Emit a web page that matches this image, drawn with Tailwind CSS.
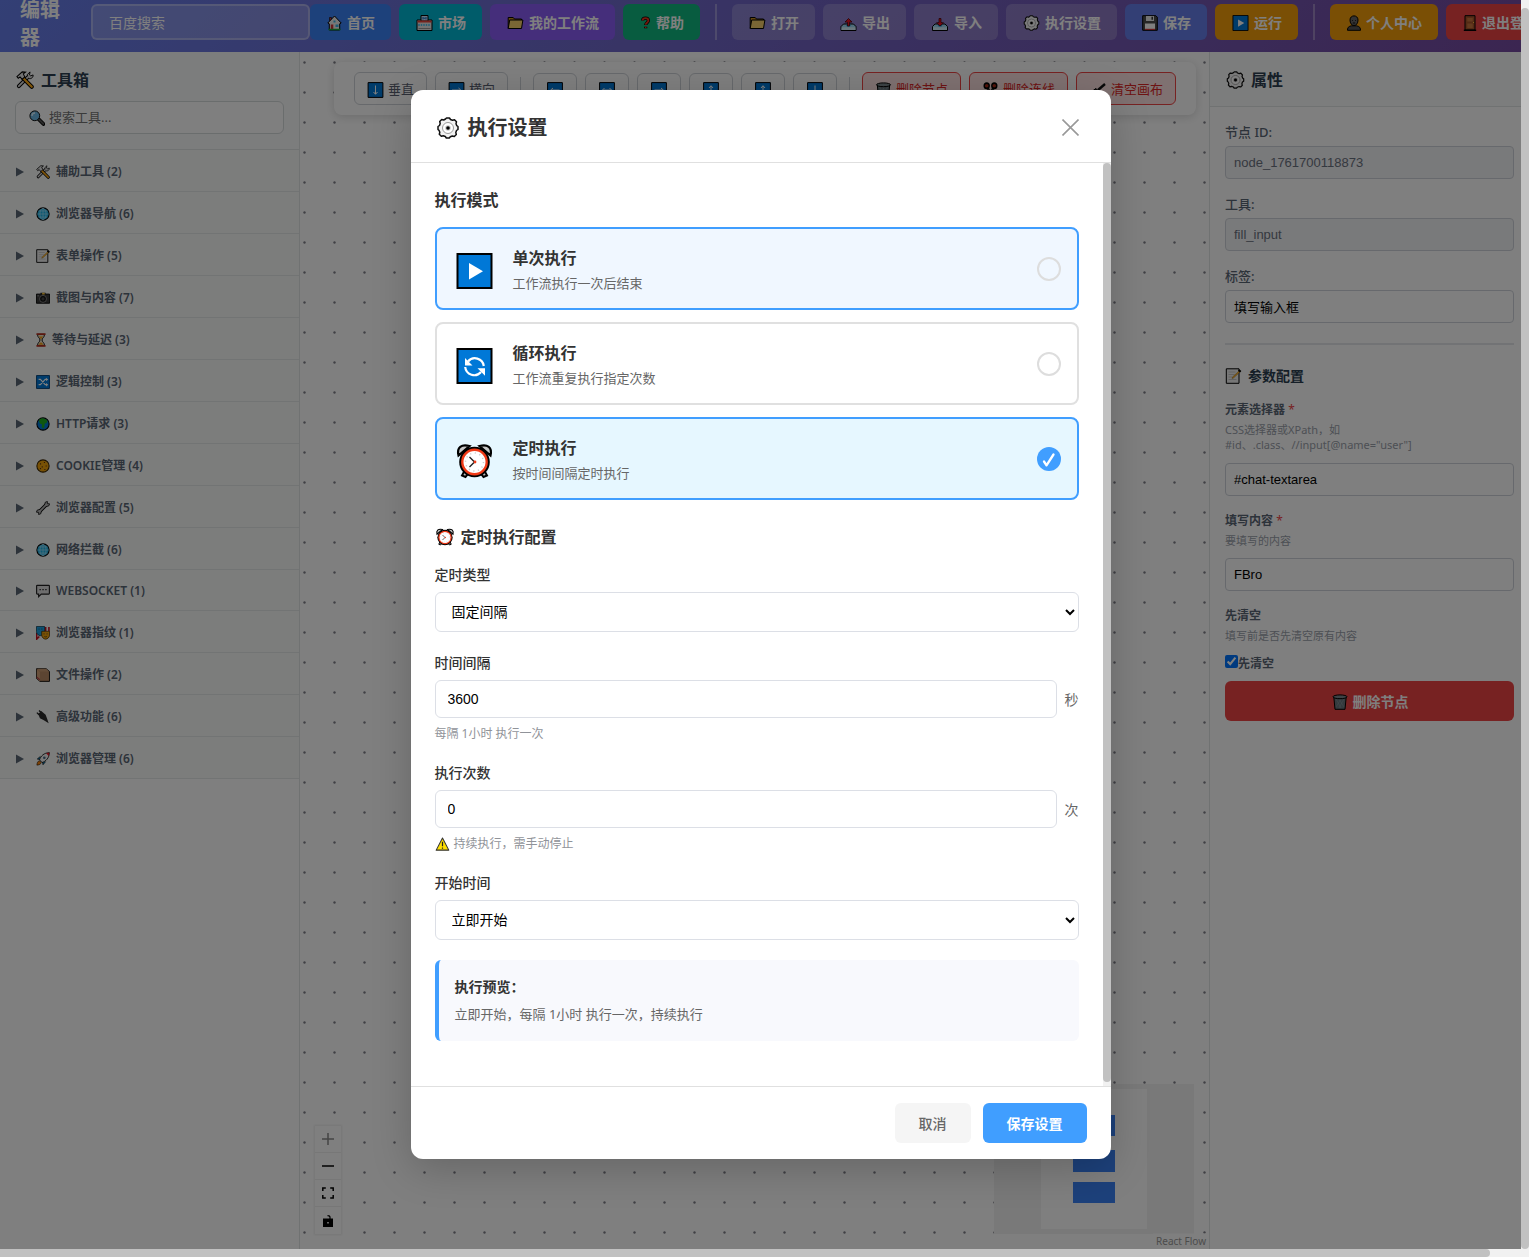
<!DOCTYPE html>
<html lang="zh-CN">
<head>
<meta charset="utf-8">
<meta name="viewport" content="width=device-width, initial-scale=1">
<title>工作流编辑器</title>
<script src="https://cdn.jsdelivr.net/npm/@tailwindcss/browser@4"></script>
</head>
<body class="font-['Noto_Sans','Noto_Sans_CJK_SC',sans-serif]">

<!-- icon sprite -->
<svg class="hidden" aria-hidden="true">
  <symbol id="house" viewBox="0 0 16 16"><path d="M3 7h10v7.5H3z" fill="#f3ece6"/><path d="M3 2.500h2v3H3z" fill="#d13438" stroke="#000" stroke-width=".6"/><path d="M8 1 1.300 8l1.500.8V15h10.400V8.800l1.500-.8z" fill="#f1eeec" stroke="#000"/><path d="M4.300 9.500h2.500V15H4.300z" fill="#d13438"/><path d="M9 9.500h3V12H9zM7 5.500h2v2H7z" fill="#38b8e8"/><path d="M2 14.500h12" stroke="#16a63a" stroke-width="1.500"/></symbol>
  <symbol id="store" viewBox="0 0 16 16"><path d="M.5 5h15v10.500H.5z" fill="#e6e6e6" stroke="#000"/><path d="M4.500.5h7V6h-7z" fill="#cfe4ff" stroke="#000"/><path d="M6.500 2v2.500M9.500 2v2.500M7 3.200h2" stroke="#0067c0"/><path d="M1 5.500h14V7.500H1z" fill="#e8443a"/><path d="M2.500 9v2M5 9v2M7.500 9v2M10 9v2M12.500 9v2" stroke="#4cc2ee" stroke-width="1.400"/><path d="M2 13.500h12" stroke="#999"/></symbol>
  <symbol id="folder" viewBox="0 0 16 16"><path d="M.7 13.500v-11h5L7 4h7v2" fill="#c98d1c" stroke="#000" stroke-linejoin="round"/><path d="M.7 13.500 2.200 5H15.400L14 13.500z" fill="#f5cd6b" stroke="#000" stroke-linejoin="round"/></symbol>
  <symbol id="question" viewBox="0 0 16 16"><path d="M4.500 5C4.500 1 11.500 1 11.500 5c0 2.700-3.200 2.700-3.200 5.500M8.200 12.500v2" fill="none" stroke="#000" stroke-width="4"/><path d="M4.500 5C4.500 1 11.500 1 11.500 5c0 2.700-3.200 2.700-3.200 5M8.200 12.700v1.500" fill="none" stroke="#e8321a" stroke-width="2.200"/></symbol>
  <symbol id="outbox" viewBox="0 0 16 16"><path d="M3 9h10l2.500 2.500v4H.5v-4z" fill="#9fd9f2" stroke="#000" stroke-linejoin="round"/><path d="M1 12.300h14V15H1z" fill="#d5effa"/><path d="M5.500 9.500h5l-1 2h-3z" fill="#1b8fd0"/><path d="M8 3.500 4.500 7l2.500.2V11h2V7.200l2.500-.2z" fill="#e81224" stroke="#3a0000" stroke-width=".7"/></symbol>
  <symbol id="inbox" viewBox="0 0 16 16"><path d="M3 9h10l2.500 2.500v4H.5v-4z" fill="#9fd9f2" stroke="#000" stroke-linejoin="round"/><path d="M1 12.300h14V15H1z" fill="#d5effa"/><path d="M5.500 9.500h5l-1 2h-3z" fill="#1b8fd0"/><path d="M8 11 4.500 7.800 7 7.500V3.500h2v4l2.500.3z" fill="#e81224" stroke="#3a0000" stroke-width=".7"/></symbol>
  <symbol id="gear" viewBox="0 0 22 22"><path d="m8.500 2 1-1h3l1 1.500 2 .7 2-.5 2 2-.5 2 .8 2L21 9.500v3l-1.500 1-.7 2 .5 2-2 2-2-.5-2 .8-1 1.200h-3l-1-1.500-2-.7-2 .5-2-2 .5-2-.8-2L1 12.500v-3L2.500 8.500l.7-2-.5-2 2-2 2 .5z" fill="#f2f2f2" stroke="#111" stroke-width="1.500" stroke-linejoin="round"/><circle cx="11" cy="11" r="5.500" fill="#fff" stroke="#999"/><circle cx="11" cy="11" r="2.800" fill="#c9c9c9"/><circle cx="11" cy="11" r="1.800" fill="#000"/></symbol>
  <symbol id="floppy" viewBox="0 0 16 16"><path d="M.7.700h13.100l1.500 1.500v13.100H.7z" fill="#4d4d4d" stroke="#000"/><path d="M4 1h8v5H4z" fill="#e9e9e9"/><path d="M9.500 1.800h1.400v3H9.500z" fill="#222"/><path d="M3 8.500h10V15H3z" fill="#fff"/><path d="M3 13.800h10V15H3z" fill="#d13438"/></symbol>
  <symbol id="play" viewBox="0 0 36 36"><path d="M1 1h34v34H1z" fill="#0078d7" stroke="#000" stroke-width="2"/><path d="M12.500 10v16.500L26.500 18.200z" fill="#fff"/></symbol>
  <symbol id="repeat" viewBox="0 0 36 36"><path d="M1 1h34v34H1z" fill="#0078d7" stroke="#000" stroke-width="2"/><path d="M11.500 13.500A9 9 0 0 1 27.300 18M8.700 19A9 9 0 0 0 24.500 24" fill="none" stroke="#fff" stroke-width="2.200"/><path d="M8.500 10v7.500H16zM28.500 27.800v-7.500H21z" fill="#fff"/></symbol>
  <symbol id="person" viewBox="0 0 16 16"><path d="M1.500 15.300c0-4 2.500-4 4-4.500h5c1.500.5 4 .5 4 4.500z" fill="#555" stroke="#000"/><path d="M4 5c0-5.500 8-5.500 8 0 0 3-1.500 5.500-4 5.500S4 8 4 5z" fill="#666" stroke="#000"/><path d="M6 5.500h.8M9.200 5.500h.8M6.800 8h2.400" stroke="#111"/></symbol>
  <symbol id="door" viewBox="0 0 16 16"><path d="M3 .7h10V15H3z" fill="#a8542a" stroke="#000"/><path d="M5.300 3h5.400v3.500H5.300zM5.300 8.500h5.400V13H5.300z" fill="#c8773f"/><path d="M11 7.500h1" stroke="#ffc83d"/><path d="M1.800 15.300h12.400" stroke="#000" stroke-width="1.400"/></symbol>
  <symbol id="tools" viewBox="0 0 16 16"><path d="m2.500 13.500 8-8" stroke="#000" stroke-width="3.400" stroke-linecap="round"/><path d="M10 3.200 12.500.8 12 3.500l1 .8 2.200-.8C15.600 6 12.500 8 10.500 6z" fill="#ddd" stroke="#000" stroke-width=".8"/><path d="m2.500 13.500 8-8" stroke="#ddd" stroke-width="1.600" stroke-linecap="round"/><path d="m6.500 6.500 7.500 7.500" stroke="#000" stroke-width="3.600" stroke-linecap="round"/><path d="m6.500 6.500 7.500 7.500" stroke="#ffaa12" stroke-width="2" stroke-linecap="round"/><path d="M.8 5 5.500.8l3 .3-2 1.500 1.300 2.600L5.500 7.500 3.600 5.200 2 6.500z" fill="#e5e5e5" stroke="#000" stroke-width=".9"/></symbol>
  <symbol id="search" viewBox="0 0 16 16"><path d="m9.500 9 5 5" stroke="#000" stroke-width="3.800" stroke-linecap="round"/><path d="m10 9.500 4.300 4.300" stroke="#555" stroke-width="2" stroke-linecap="round"/><circle cx="5.800" cy="5.800" r="4.900" fill="#6cb8e6" stroke="#111"/><path d="M3 6a3 3 0 0 1 3-3" stroke="#d8f1ff" stroke-width="1.400" fill="none"/></symbol>
  <symbol id="globe" viewBox="0 0 16 16"><circle cx="8" cy="8" r="7" fill="#1fb4e6" stroke="#000" stroke-width="1.200"/><path d="M8 1.500v13M1.500 8h13M3 4.500h10M3 11.500h10" stroke="#a5e3fa" stroke-width=".8"/><ellipse cx="8" cy="8" rx="3.500" ry="6.500" fill="none" stroke="#a5e3fa" stroke-width=".8"/></symbol>
  <symbol id="memo" viewBox="0 0 16 16"><path d="M.8.800h12.700v14.500H.8z" fill="#efefef" stroke="#000"/><path d="M3 4h7M3 6.500h6M3 9h4M3 11.500h8" stroke="#c5c5c5"/><path d="m6.500 10.500.5-1.500 7-6.500 1 1-7 6.500z" fill="#ffb32c" stroke="#805a10" stroke-width=".4"/><path d="m13.200 2 2 1.800" stroke="#000" stroke-width="2"/></symbol>
  <symbol id="camera" viewBox="0 0 16 16"><path d="M.5 3.500h15V14H.5z" fill="#3a3a3a" stroke="#000"/><path d="M5 2h6v3H5z" fill="#222"/><path d="M7 2h3v2H7z" fill="#ffc83d"/><circle cx="8" cy="9" r="4" fill="#111" stroke="#8a8a8a"/><circle cx="8" cy="9" r="1.800" fill="#444"/><path d="M1.500 5.500h2" stroke="#999"/></symbol>
  <symbol id="hourglass" viewBox="0 0 11 16"><path d="M1.500 1.500c0 4 2.800 4 2.800 6.500s-2.800 2.500-2.800 6.500h8c0-4-2.800-4-2.800-6.500s2.800-2.500 2.800-6.500z" fill="#efe3c8" stroke="#000"/><path d="M3 4h5L5.500 7.500zM3 13.500c.3-2 2.500-3 2.500-3S7.700 11.500 8 13.500z" fill="#f2a018"/><path d="M.3 1.300h10.400M.3 14.700h10.400" stroke="#b5301f" stroke-width="1.900"/></symbol>
  <symbol id="shuffle" viewBox="0 0 16 16"><path d="M.6.600h14.800v14.800H.6z" fill="#0078d7" stroke="#003a70"/><path d="M3 5h2l5.500 6H12M3 11h2l5.500-6H12" fill="none" stroke="#fff" stroke-width="1.200"/><path d="M11.500 3v4L14 5zM11.500 9v4l2.500-2z" fill="#fff"/></symbol>
  <symbol id="earth" viewBox="0 0 16 16"><circle cx="8" cy="8" r="7" fill="#0078d7" stroke="#000" stroke-width="1.200"/><path d="M4 2.500c3-2 7-1 9 2L12 7l-2 .5-.5 4L8 13.500 6.500 11 7 8.500 4.500 7.500l-1-2.500z" fill="#1eaf1e"/></symbol>
  <symbol id="cookie" viewBox="0 0 16 16"><circle cx="8" cy="8" r="7" fill="#f0a30a" stroke="#3a2400" stroke-width="1.200"/><path d="M4.500 5.500h1.300M9 4h1.300M11 8h1.300M6.500 9h1.300M4.500 11h1.300M9.500 12h1.300" stroke="#5b3413" stroke-width="1.400"/></symbol>
  <symbol id="wrench" viewBox="0 0 16 16"><path d="m4 12 8-8" stroke="#000" stroke-width="4"/><path d="M10 4.500 10.500 1.500 13 .5V3l2.500.2-.8 2.300-3 .8zM6 11.500l-.5 3-2.500 1V13L.5 12.800l.8-2.300 3-.8z" fill="#bbb" stroke="#000" stroke-width=".9"/><path d="m4.200 11.800 7.600-7.600" stroke="#bbb" stroke-width="2"/></symbol>
  <symbol id="speech" viewBox="0 0 16 16"><path d="M1.500 1.500h13q.8 0 .8.800v8.400q0 .8-.8.800H6L3 14.500v-3H1.500q-.8 0-.8-.8V2.300q0-.8.800-.8z" fill="#ddd" stroke="#222" stroke-width="1.300"/><path d="M4 6.500h1.500M7.300 6.500h1.500M10.600 6.500h1.500" stroke="#222" stroke-width="1.500"/></symbol>
  <symbol id="masks" viewBox="0 0 16 16"><path d="M.8 8v7l3-3M11 1v5M14.800 1v5" stroke="#c50f1f" stroke-width="1.800" fill="none"/><path d="M.5.500h9.300v6C9.800 9 7 11 5 11S.5 9 .5 6.500z" fill="#1ba1e2" stroke="#002a3c" stroke-width=".8"/><path d="M6.500 6h9v4.500c0 2.500-2.500 4.500-4.500 4.500s-4.500-2-4.500-4.500z" fill="#f0a30a" stroke="#3a2400" stroke-width=".8"/><path d="M8.500 9h1.300M12 9h1.300M9.500 12q1.500 1 3 0M2.800 3.500h1.300M6 3.500h1.300" stroke="#333" stroke-width=".8" fill="none"/></symbol>
  <symbol id="box" viewBox="0 0 16 16"><path d="M.6.800h11L15.400 4v11.300H4.500L.6 12z" fill="#b88a64" stroke="#000"/><path d="M.9 1 4.500 4.500V15L.9 12z" fill="#d3a178"/><path d="M1.500.9h10L15 4H4.500z" fill="#c99b73"/><path d="M1 10.500 4.300 13.500" stroke="#b5454a" stroke-width="1.500"/></symbol>
  <symbol id="plug" viewBox="0 0 16 16"><path d="M2.500 4.500 6 1l5 4.500 1.500 4L14.500 15l-6-3.500-4-2z" fill="#2b2b2b"/><path d="m1 3 2.500 2.500M3.500 .7l2 2" stroke="#222" stroke-width="1.600"/></symbol>
  <symbol id="rocket" viewBox="0 0 16 16"><path d="M5 5 1.500 8l3 .5M11 11l-3 3.500L7.500 11" fill="#1ba1e2" stroke="#000" stroke-width=".8"/><path d="M4 9c1.500-4.500 5-8 11.300-8.300C15 7 11.500 10.500 7 12z" fill="#f2f2f2" stroke="#000" stroke-width=".9"/><path d="M11.500 1.300 15.300.7 14.700 4.500z" fill="#e81224"/><circle cx="9.500" cy="6.500" r="1.500" fill="#4a6a88"/><path d="M1 15c.2-3 1-4.500 3-5l2 2c-.5 2-2 2.800-5 3z" fill="#f7830c" stroke="#000" stroke-width=".6"/></symbol>
  <symbol id="a-down" viewBox="0 0 16 16"><path d="M.6.600h14.800v14.800H.6z" fill="#0078d7" stroke="#000"/><path d="M8 3.500v8.500M6 10l2 2.300 2-2.300" fill="none" stroke="#fff"/></symbol>
  <symbol id="a-up" viewBox="0 0 16 16"><path d="M.6.600h14.800v14.800H.6z" fill="#0078d7" stroke="#000"/><path d="M8 12.500V4M6 6l2-2.300L10 6" fill="none" stroke="#fff"/></symbol>
  <symbol id="a-right" viewBox="0 0 16 16"><path d="M.6.600h14.800v14.800H.6z" fill="#0078d7" stroke="#000"/><path d="M3.500 8H12M10 6l2.300 2L10 10" fill="none" stroke="#fff"/></symbol>
  <symbol id="a-left" viewBox="0 0 16 16"><path d="M.6.600h14.800v14.800H.6z" fill="#0078d7" stroke="#000"/><path d="M12.500 8H4M6 6 3.700 8 6 10" fill="none" stroke="#fff"/></symbol>
  <symbol id="a-both" viewBox="0 0 16 16"><path d="M.6.600h14.800v14.800H.6z" fill="#0078d7" stroke="#000"/><path d="M12.500 8h-9M5.500 6l-2 2 2 2M10.500 6l2 2-2 2" fill="none" stroke="#fff"/></symbol>
  <symbol id="trash" viewBox="0 0 16 16"><path d="M1.800 3h12.400l-1.200 12.300H3z" fill="#68757b" stroke="#000"/><path d="M4 5l5 9M7 5l5 8M12 5l-5 9M9 5l-5 8" stroke="#8d999e" stroke-width=".5"/><ellipse cx="8" cy="2.800" rx="7" ry="1.900" fill="#7b878c" stroke="#000"/></symbol>
  <symbol id="scissors" viewBox="0 0 16 16"><path d="m5 6 6 9M11 6l-6 9" stroke="#333" stroke-width="2.400"/><ellipse cx="4.200" cy="3.800" rx="3.200" ry="3.500" fill="#000"/><ellipse cx="11.800" cy="3.800" rx="3.200" ry="3.500" fill="#000"/><circle cx="4.200" cy="3.700" r="1.800" fill="#a82818"/><circle cx="11.800" cy="3.700" r="1.800" fill="#a82818"/></symbol>
  <symbol id="broom" viewBox="0 0 16 16"><path d="m8 8 7-6" stroke="#111" stroke-width="2.400"/><path d="M6 6.500 9.500 10 6 15 1 10z" fill="#222" stroke="#000"/></symbol>
  <symbol id="clock" viewBox="0 0 36 36"><path d="m9 26-3.500 6.500L9 34l4-5M27 26l3.500 6.500L27 34l-4-5" fill="#bbb" stroke="#000" stroke-width="2"/><path d="M2 12.500C0 4 5 1 13 3zM34 12.500C36 4 31 1 23 3z" fill="#c6c6c6" stroke="#000" stroke-width="2.200"/><circle cx="18" cy="19" r="15.300" fill="#000"/><circle cx="18" cy="19" r="12.200" fill="#fff" stroke="#f03a17" stroke-width="2.400"/><circle cx="18" cy="19" r="9" fill="none" stroke="#ccc" stroke-width="1.500" stroke-dasharray="1.200 3.510"/><path d="m13 14 5 5-5 5" fill="none" stroke="#222" stroke-width="1.400"/><circle cx="18.500" cy="19" r="1.400" fill="#f03a17"/></symbol>
  <symbol id="warning" viewBox="0 0 16 16"><path d="M8 1.200 15.200 15H.8z" fill="#ffe000" stroke="#333" stroke-width="1.200" stroke-linejoin="round"/><path d="M8 5.500v5M8 12v1.500" stroke="#222" stroke-width="1.400"/></symbol>
</svg>

<div class="grid h-screen grid-cols-[1fr_8px] grid-rows-[1fr_8px] overflow-hidden bg-[#f1f1f1]">
  <div class="relative flex min-w-0 flex-col overflow-hidden bg-white">

    <header class="flex h-13 shrink-0 items-center bg-linear-135 from-[#667eea] to-[#764ba2] pb-2 pl-5 text-sm font-semibold whitespace-nowrap text-white">
      <h1 class="w-10 shrink-0 pt-1 text-xl leading-7 font-bold whitespace-normal">编辑器</h1>
      <input type="text" aria-label="工作流名称" value="百度搜索" class="ml-[31px] h-9 w-[219px] shrink-0 rounded-md border-2 border-white/30 bg-white/20 px-4 text-sm font-normal text-white">
      <nav class="flex shrink-0 items-center gap-2">
        <button class="flex h-9 items-center gap-1 rounded-md bg-[#3b82f6] px-4 pt-0.5"><svg class="h-4 w-[17px]"><use href="#house"/></svg>首页</button>
        <button class="flex h-9 items-center gap-1 rounded-md bg-[#00b8d4] px-4 pt-0.5"><svg class="h-4 w-[19px]"><use href="#store"/></svg>市场</button>
        <button class="flex h-9 items-center gap-1 rounded-md bg-[#8b5cf6] px-4 pt-0.5"><svg class="h-4 w-[19px]"><use href="#folder"/></svg>我的工作流</button>
        <button class="flex h-9 items-center gap-1 rounded-md bg-[#10b981] px-4 pt-0.5"><svg class="h-4 w-[13px]"><use href="#question"/></svg>帮助</button>
        <span class="mx-[7px] h-9 w-0.5 bg-white/30"></span>
        <button class="flex h-9 items-center gap-1 rounded-md bg-white/20 px-4 pt-0.5"><svg class="h-4 w-[19px]"><use href="#folder"/></svg>打开</button>
        <button class="flex h-9 items-center gap-1 rounded-md bg-white/20 px-4 pt-0.5"><svg class="h-4 w-[19px]"><use href="#outbox"/></svg>导出</button>
        <button class="flex h-9 items-center gap-1 rounded-md bg-white/20 px-4 pt-0.5"><svg class="h-4 w-5"><use href="#inbox"/></svg>导入</button>
        <button class="flex h-9 items-center gap-1 rounded-md bg-white/20 px-4 pt-0.5"><svg class="h-4 w-[19px]"><use href="#gear"/></svg>执行设置</button>
        <button class="flex h-9 items-center gap-1 rounded-md bg-[#667eea] px-4 pt-0.5"><svg class="h-4 w-[18px]"><use href="#floppy"/></svg>保存</button>
        <button class="flex h-9 items-center gap-1 rounded-md bg-[#f59e0b] px-4 pt-0.5"><svg class="h-4 w-[19px]"><use href="#play"/></svg>运行</button>
        <span class="mx-[7px] h-9 w-0.5 bg-white/30"></span>
        <button class="flex h-9 items-center gap-1 rounded-md bg-[#f59e0b] px-4 pt-0.5"><svg class="h-4 w-4"><use href="#person"/></svg>个人中心</button>
        <button class="flex h-9 items-center gap-1 rounded-md bg-[#ef4444] px-4 pt-0.5"><svg class="h-4 w-4"><use href="#door"/></svg>退出登录</button>
      </nav>
    </header>

    <div class="flex min-h-0 flex-1">
      <!-- toolbox -->
      <aside class="w-[300px] shrink-0 border-r border-[#e0e4e4] bg-white text-[#5a6675]">
        <div class="border-b border-[#e0e4e4] bg-[#f8fafa] px-[15px] pt-4 pb-[15px]">
          <h2 class="flex h-6 items-center gap-1.5 text-base font-bold text-[#2c3e50]"><svg class="h-[18px] w-5"><use href="#tools"/></svg>工具箱</h2>
          <label class="mt-[9px] flex h-[33px] items-center gap-1 rounded-md border border-[#d5dadb] bg-white pl-[13px]">
            <svg class="size-4 shrink-0"><use href="#search"/></svg>
            <input type="search" aria-label="搜索工具" placeholder="搜索工具..." class="w-full text-[13px] placeholder:text-[#757575] focus:outline-none">
          </label>
        </div>
        <ul class="text-xs font-semibold">
          <li class="flex h-[42px] items-center border-b border-[#e4e8e8] bg-[#f8faf9] pt-0.5 pl-4"><svg class="mr-3 h-2.5 w-2" viewBox="0 0 8 10"><path d="M0 .5v9L8 5z" fill="#5a6675"/></svg><svg class="mr-1.5 size-3.5"><use href="#tools"/></svg>辅助工具 (2)</li>
          <li class="flex h-[42px] items-center border-b border-[#e4e8e8] bg-[#f8faf9] pt-0.5 pl-4"><svg class="mr-3 h-2.5 w-2" viewBox="0 0 8 10"><path d="M0 .5v9L8 5z" fill="#5a6675"/></svg><svg class="mr-1.5 size-3.5"><use href="#globe"/></svg>浏览器导航 (6)</li>
          <li class="flex h-[42px] items-center border-b border-[#e4e8e8] bg-[#f8faf9] pt-0.5 pl-4"><svg class="mr-3 h-2.5 w-2" viewBox="0 0 8 10"><path d="M0 .5v9L8 5z" fill="#5a6675"/></svg><svg class="mr-1.5 size-3.5"><use href="#memo"/></svg>表单操作 (5)</li>
          <li class="flex h-[42px] items-center border-b border-[#e4e8e8] bg-[#f8faf9] pt-0.5 pl-4"><svg class="mr-3 h-2.5 w-2" viewBox="0 0 8 10"><path d="M0 .5v9L8 5z" fill="#5a6675"/></svg><svg class="mr-1.5 size-3.5"><use href="#camera"/></svg>截图与内容 (7)</li>
          <li class="flex h-[42px] items-center border-b border-[#e4e8e8] bg-[#f8faf9] pt-0.5 pl-4"><svg class="mr-3 h-2.5 w-2" viewBox="0 0 8 10"><path d="M0 .5v9L8 5z" fill="#5a6675"/></svg><svg class="mr-1.5 h-3.5 w-2.5"><use href="#hourglass"/></svg>等待与延迟 (3)</li>
          <li class="flex h-[42px] items-center border-b border-[#e4e8e8] bg-[#f8faf9] pt-0.5 pl-4"><svg class="mr-3 h-2.5 w-2" viewBox="0 0 8 10"><path d="M0 .5v9L8 5z" fill="#5a6675"/></svg><svg class="mr-1.5 size-3.5"><use href="#shuffle"/></svg>逻辑控制 (3)</li>
          <li class="flex h-[42px] items-center border-b border-[#e4e8e8] bg-[#f8faf9] pt-0.5 pl-4"><svg class="mr-3 h-2.5 w-2" viewBox="0 0 8 10"><path d="M0 .5v9L8 5z" fill="#5a6675"/></svg><svg class="mr-1.5 size-3.5"><use href="#earth"/></svg>HTTP请求 (3)</li>
          <li class="flex h-[42px] items-center border-b border-[#e4e8e8] bg-[#f8faf9] pt-0.5 pl-4"><svg class="mr-3 h-2.5 w-2" viewBox="0 0 8 10"><path d="M0 .5v9L8 5z" fill="#5a6675"/></svg><svg class="mr-1.5 size-3.5"><use href="#cookie"/></svg>COOKIE管理 (4)</li>
          <li class="flex h-[42px] items-center border-b border-[#e4e8e8] bg-[#f8faf9] pt-0.5 pl-4"><svg class="mr-3 h-2.5 w-2" viewBox="0 0 8 10"><path d="M0 .5v9L8 5z" fill="#5a6675"/></svg><svg class="mr-1.5 size-3.5"><use href="#wrench"/></svg>浏览器配置 (5)</li>
          <li class="flex h-[42px] items-center border-b border-[#e4e8e8] bg-[#f8faf9] pt-0.5 pl-4"><svg class="mr-3 h-2.5 w-2" viewBox="0 0 8 10"><path d="M0 .5v9L8 5z" fill="#5a6675"/></svg><svg class="mr-1.5 size-3.5"><use href="#globe"/></svg>网络拦截 (6)</li>
          <li class="flex h-[41px] items-center border-b border-[#e4e8e8] bg-[#f8faf9] pt-0.5 pl-4"><svg class="mr-3 h-2.5 w-2" viewBox="0 0 8 10"><path d="M0 .5v9L8 5z" fill="#5a6675"/></svg><svg class="mr-1.5 size-3.5"><use href="#speech"/></svg>WEBSOCKET (1)</li>
          <li class="flex h-[42px] items-center border-b border-[#e4e8e8] bg-[#f8faf9] pt-0.5 pl-4"><svg class="mr-3 h-2.5 w-2" viewBox="0 0 8 10"><path d="M0 .5v9L8 5z" fill="#5a6675"/></svg><svg class="mr-1.5 size-3.5"><use href="#masks"/></svg>浏览器指纹 (1)</li>
          <li class="flex h-[42px] items-center border-b border-[#e4e8e8] bg-[#f8faf9] pt-0.5 pl-4"><svg class="mr-3 h-2.5 w-2" viewBox="0 0 8 10"><path d="M0 .5v9L8 5z" fill="#5a6675"/></svg><svg class="mr-1.5 size-3.5"><use href="#box"/></svg>文件操作 (2)</li>
          <li class="flex h-[42px] items-center border-b border-[#e4e8e8] bg-[#f8faf9] pt-0.5 pl-4"><svg class="mr-3 h-2.5 w-2" viewBox="0 0 8 10"><path d="M0 .5v9L8 5z" fill="#5a6675"/></svg><svg class="mr-1.5 size-3.5"><use href="#plug"/></svg>高级功能 (6)</li>
          <li class="flex h-[42px] items-center border-b border-[#e4e8e8] bg-[#f8faf9] pt-0.5 pl-4"><svg class="mr-3 h-2.5 w-2" viewBox="0 0 8 10"><path d="M0 .5v9L8 5z" fill="#5a6675"/></svg><svg class="mr-1.5 size-3.5"><use href="#rocket"/></svg>浏览器管理 (6)</li>
        </ul>
      </aside>

      <!-- canvas -->
      <main class="relative min-w-0 flex-1 overflow-hidden bg-white">
        <svg class="absolute inset-0 h-full w-full"><defs><pattern id="dots" width="30" height="30" patternUnits="userSpaceOnUse"><circle cx="4.500" cy="10.500" r="1.200" fill="#81818a"/></pattern></defs><rect width="100%" height="100%" fill="url(#dots)"/></svg>

        <div class="absolute top-[10px] left-[34px] flex h-[53px] items-center gap-2 rounded-lg bg-white px-5 text-[13px] whitespace-nowrap text-[#5a6070] shadow-[0_2px_10px_rgba(0,0,0,0.15)]">
          <button class="flex h-[33px] items-center gap-1 rounded-md border border-[#cfd3d8] px-3 pt-0.5"><svg class="h-4 w-[17px]"><use href="#a-down"/></svg>垂直</button>
          <button class="flex h-[33px] items-center gap-1 rounded-md border border-[#cfd3d8] px-3 pt-0.5"><svg class="h-4 w-[17px]"><use href="#a-right"/></svg>横向</button>
          <span class="mx-1 h-6 w-px bg-[#cfd3d8]"></span>
          <button aria-label="左对齐" class="grid h-[31px] w-11 place-items-center rounded-md border border-[#cfd3d8] pt-0.5"><svg class="size-4"><use href="#a-left"/></svg></button>
          <button aria-label="水平居中" class="grid h-[31px] w-11 place-items-center rounded-md border border-[#cfd3d8] pt-0.5"><svg class="size-4"><use href="#a-both"/></svg></button>
          <button aria-label="右对齐" class="grid h-[31px] w-11 place-items-center rounded-md border border-[#cfd3d8] pt-0.5"><svg class="size-4"><use href="#a-right"/></svg></button>
          <button aria-label="顶部对齐" class="grid h-[31px] w-11 place-items-center rounded-md border border-[#cfd3d8] pt-0.5"><svg class="size-4"><use href="#a-up"/></svg></button>
          <button aria-label="垂直居中" class="grid h-[31px] w-11 place-items-center rounded-md border border-[#cfd3d8] pt-0.5"><svg class="size-4"><use href="#a-up"/></svg></button>
          <button aria-label="底部对齐" class="grid h-[31px] w-11 place-items-center rounded-md border border-[#cfd3d8] pt-0.5"><svg class="size-4"><use href="#a-down"/></svg></button>
          <span class="mx-1 h-6 w-px bg-[#cfd3d8]"></span>
          <button class="flex h-[33px] items-center gap-1 rounded-md border border-[#ef4444] bg-[#fee2e2] px-3 pt-0.5 text-[#dc2626]"><svg class="h-4 w-[17px]"><use href="#trash"/></svg>删除节点</button>
          <button class="flex h-[33px] items-center gap-1 rounded-md border border-[#ef4444] bg-[#fee2e2] px-3 pt-0.5 text-[#dc2626]"><svg class="h-4 w-[17px]"><use href="#scissors"/></svg>删除连线</button>
          <button class="flex h-[33px] items-center gap-1 rounded-md border border-[#ef4444] bg-[#fee2e2] px-3 pt-0.5 text-[#dc2626]"><svg class="h-4 w-[18px]"><use href="#broom"/></svg>清空画布</button>
        </div>

        <div class="absolute bottom-[15px] left-[15px] flex w-[26px] flex-col bg-white shadow-[0_0_2px_1px_rgba(0,0,0,0.08)]">
          <button aria-label="放大" class="grid h-[27px] place-items-center border-b border-[#eee]"><svg class="size-3" viewBox="0 0 12 12"><path d="M6 0v12M0 6h12" stroke="#8a8a8a" stroke-width="1.500"/></svg></button>
          <button aria-label="缩小" class="grid h-[27px] place-items-center border-b border-[#eee]"><svg class="size-3" viewBox="0 0 12 12"><path d="M0 6h12" stroke="#000" stroke-width="1.500"/></svg></button>
          <button aria-label="适应视图" class="grid h-[27px] place-items-center border-b border-[#eee]"><svg class="size-3" viewBox="0 0 12 12"><path d="M.8 4V1h3M8.200 1h3v3M11.200 8v3h-3M3.800 11h-3V8" fill="none" stroke="#000" stroke-width="1.500"/></svg></button>
          <button aria-label="锁定" class="grid h-[27px] place-items-center"><svg class="size-3" viewBox="0 0 12 12"><path d="M1 3.500h10V12H1z"/><path d="M8 4V2.300Q8 .6 5.500.6" fill="none" stroke="#000" stroke-width="1.200"/><path d="M5.200 7h1.600v1.600H5.200z" fill="#fff"/></svg></button>
        </div>

        <svg class="absolute right-[15px] bottom-[15px] h-[150px] w-[200px] bg-white" viewBox="0 0 200 150"><path d="M0 0h200v150H0zM47 5v140h106V5z" fill="#f3f3f3" fill-rule="evenodd"/><path d="M79 31h42v21H79zM79 66h42v22H79zM79 98h42v21H79z" fill="#3b82f6"/></svg>
        <a href="#" class="absolute right-0 bottom-0 bg-white/50 px-[3px] text-[10px] leading-4 text-[#999]">React Flow</a>
      </main>

      <!-- properties -->
      <aside class="w-[312px] shrink-0 border-l border-[#e0e4e4] bg-white text-[#5a6675]">
        <div class="flex h-[55px] items-center border-b border-[#e0e4e4] bg-[#f8fafa] pt-0.5 pl-4">
          <h2 class="flex items-center gap-1.5 text-base font-bold text-[#2c3e50]"><svg class="h-[18px] w-[19px]"><use href="#gear"/></svg>属性</h2>
        </div>
        <form class="pt-[15px] pr-[7px] pl-[15px]">
          <label for="nid" class="block text-[13px] leading-5 font-medium">节点 ID:</label>
          <input id="nid" readonly value="node_1761700118873" class="mt-1 mb-[15px] block h-[33px] w-full rounded border border-[#cfd3da] bg-[#f3f4f6] px-2 font-['Liberation_Sans','Noto_Sans_CJK_SC',sans-serif] text-[13px] text-[#6b7280]">
          <label for="tool" class="block text-[13px] leading-5 font-medium">工具:</label>
          <input id="tool" readonly value="fill_input" class="mt-1 mb-[15px] block h-[33px] w-full rounded border border-[#cfd3da] bg-[#f3f4f6] px-2 font-['Liberation_Sans','Noto_Sans_CJK_SC',sans-serif] text-[13px] text-[#6b7280]">
          <label for="lab" class="block text-[13px] leading-5 font-medium">标签:</label>
          <input id="lab" value="填写输入框" class="mt-1 block h-[33px] w-full rounded border border-[#cfd3da] px-2 font-['Liberation_Sans','Noto_Sans_CJK_SC',sans-serif] text-[13px] text-black">
          <hr class="my-5 border-t-2 border-[#e5e7eb]">
          <h3 class="mb-[15px] flex h-5 items-center gap-1.5 pt-0.5 text-sm font-bold text-[#2c3e50]"><svg class="h-4 w-[17px]"><use href="#memo"/></svg>参数配置</h3>
          <label for="sel" class="block text-xs leading-5 font-semibold">元素选择器 <span class="font-normal text-[#ef4444]">*</span></label>
          <p class="mt-0.5 text-[11px] leading-[15px] text-[#9aa0aa]">CSS选择器或XPath，如<br>#id、.class、//input[@name="user"]</p>
          <input id="sel" value="#chat-textarea" class="mt-[11px] mb-[15px] block h-[33px] w-full rounded border border-[#cfd3da] px-2 font-['Liberation_Sans','Noto_Sans_CJK_SC',sans-serif] text-[13px] text-black">
          <label for="val" class="block text-xs leading-5 font-semibold">填写内容 <span class="font-normal text-[#ef4444]">*</span></label>
          <p class="mt-0.5 text-[11px] leading-[15px] text-[#9aa0aa]">要填写的内容</p>
          <input id="val" value="FBro" class="mt-2.5 mb-[15px] block h-[33px] w-full rounded border border-[#cfd3da] px-2 font-['Liberation_Sans','Noto_Sans_CJK_SC',sans-serif] text-[13px] text-black">
          <p class="text-xs leading-5 font-semibold">先清空</p>
          <p class="mt-0.5 text-[11px] leading-[15px] text-[#9aa0aa]">填写前是否先清空原有内容</p>
          <label class="mt-3 mb-2 flex h-[18px] items-start text-xs leading-[18px] font-semibold"><input type="checkbox" checked class="size-[13px]">先清空</label>
          <button type="button" class="flex h-10 w-full items-center justify-center gap-1 rounded-md bg-[#ef4444] pt-0.5 text-sm font-semibold text-white"><svg class="h-4 w-[18px]"><use href="#trash"/></svg>删除节点</button>
        </form>
      </aside>
    </div>

    <!-- dialog -->
    <div class="absolute inset-0 flex items-center justify-center bg-black/50">
      <section role="dialog" aria-modal="true" aria-labelledby="dlg" class="flex w-[700px] flex-col overflow-hidden rounded-xl bg-white text-[#333] shadow-[0_10px_40px_rgba(0,0,0,0.2)]">
        <div class="flex h-[73px] items-center justify-between border-b border-[#e0e0e0] pt-[3px] pr-8 pl-[25px]">
          <h2 id="dlg" class="flex items-center gap-2 text-xl font-bold"><svg class="h-[22px] w-6"><use href="#gear"/></svg>执行设置</h2>
          <button aria-label="关闭"><svg class="size-[17px]" viewBox="0 0 17 17"><path d="m.5.500 16 16m0-16-16 16" stroke="#999" stroke-width="1.600"/></svg></button>
        </div>

        <div class="flex">
          <form class="min-w-0 flex-1 p-6">
            <h3 class="text-base leading-[26px] font-bold">执行模式</h3>
            <div class="mt-3.5 flex flex-col gap-3">
              <label class="flex h-[83px] items-center rounded-lg border-2 border-[#409eff] bg-[#f0f7ff] px-4">
                <svg class="mt-1 mr-[17px] h-9 w-[43px]"><use href="#play"/></svg>
                <span class="flex-1 pt-0.5"><b class="block text-base leading-6 font-bold">单次执行</b><small class="mt-1 block text-[13px] leading-[19px] text-[#666]">工作流执行一次后结束</small></span>
                <input type="radio" name="mode" class="size-6 appearance-none rounded-full border-2 border-[#ddd]">
              </label>
              <label class="flex h-[83px] items-center rounded-lg border-2 border-[#e0e0e0] px-4">
                <svg class="mt-1 mr-[17px] h-9 w-[43px]"><use href="#repeat"/></svg>
                <span class="flex-1 pt-0.5"><b class="block text-base leading-6 font-bold">循环执行</b><small class="mt-1 block text-[13px] leading-[19px] text-[#666]">工作流重复执行指定次数</small></span>
                <input type="radio" name="mode" class="size-6 appearance-none rounded-full border-2 border-[#ddd]">
              </label>
              <label class="flex h-[83px] items-center rounded-lg border-2 border-[#409eff] bg-[#e6f7ff] px-4">
                <svg class="mt-1 mr-[17px] h-9 w-[43px]"><use href="#clock"/></svg>
                <span class="flex-1 pt-0.5"><b class="block text-base leading-6 font-bold">定时执行</b><small class="mt-1 block text-[13px] leading-[19px] text-[#666]">按时间间隔定时执行</small></span>
                <span class="grid place-items-center">
                  <input type="radio" name="mode" checked class="col-start-1 row-start-1 size-6 appearance-none rounded-full bg-[#409eff]">
                  <svg class="pointer-events-none col-start-1 row-start-1 size-6" viewBox="0 0 24 24"><path d="M7 14.500 9.500 18.300 16.500 7.500" fill="none" stroke="#fff" stroke-width="2.300" stroke-linecap="round" stroke-linejoin="round"/></svg>
                </span>
              </label>
            </div>

            <h3 class="mt-6 flex items-center gap-1.5 text-base leading-[26px] font-bold"><svg class="h-[18px] w-5"><use href="#clock"/></svg>定时执行配置</h3>

            <label for="type" class="mt-3.5 block text-sm leading-[22px] font-medium">定时类型</label>
            <select id="type" class="mt-1.5 block h-10 w-full rounded-md border border-[#dcdfe6] bg-white pb-0.5 pl-3 text-sm text-black"><option>固定间隔</option></select>

            <label for="gap" class="mt-5 block text-sm leading-[22px] font-medium">时间间隔</label>
            <div class="mt-1.5 flex items-center gap-2 text-sm text-[#666]">
              <input id="gap" value="3600" class="h-[38px] min-w-0 flex-1 rounded-md border border-[#dcdfe6] px-3 font-['Liberation_Sans',sans-serif] text-sm text-black"><span class="pt-0.5">秒</span>
            </div>
            <p class="mt-2 text-xs leading-4 text-[#909399]">每隔 1小时 执行一次</p>

            <label for="times" class="mt-5 block text-sm leading-[22px] font-medium">执行次数</label>
            <div class="mt-1.5 flex items-center gap-2 text-sm text-[#666]">
              <input id="times" value="0" class="h-[38px] min-w-0 flex-1 rounded-md border border-[#dcdfe6] px-3 font-['Liberation_Sans',sans-serif] text-sm text-black"><span class="pt-0.5">次</span>
            </div>
            <p class="mt-2 flex items-center gap-1 text-xs leading-4 text-[#909399]"><svg class="h-3.5 w-[15px]"><use href="#warning"/></svg>持续执行，需手动停止</p>

            <label for="start" class="mt-5 block text-sm leading-[22px] font-medium">开始时间</label>
            <select id="start" class="mt-1.5 block h-10 w-full rounded-md border border-[#dcdfe6] bg-white pb-0.5 pl-3 text-sm text-black"><option>立即开始</option></select>

            <div class="mt-5 mb-[21px] rounded-md border-l-4 border-[#409eff] bg-[#f8f9fd] p-4">
              <h4 class="text-sm leading-[22px] font-bold">执行预览：</h4>
              <p class="mt-1.5 text-[13px] leading-[21px] text-[#666]">立即开始，每隔 1小时 执行一次，持续执行</p>
            </div>
          </form>
          <div class="w-2 bg-[#f1f1f1] pb-1"><div class="h-full rounded-full bg-[#c1c1c1]"></div></div>
        </div>

        <div class="flex justify-end gap-3 border-t border-[#e0e0e0] px-6 py-4 text-sm">
          <button class="h-10 rounded-md bg-[#f5f5f5] px-6 pt-0.5 font-medium text-[#666]">取消</button>
          <button class="h-10 rounded-md bg-[#409eff] px-6 pt-0.5 font-semibold text-white">保存设置</button>
        </div>
      </section>
    </div>
  </div>

  <!-- scroll tracks -->
  <div class="pt-2"><div class="h-full rounded-full bg-[#c1c1c1]"></div></div>
  <div class="pr-[31px]"><div class="h-full rounded-r-full bg-[#c1c1c1]"></div></div>
</div>
</body>
</html>
